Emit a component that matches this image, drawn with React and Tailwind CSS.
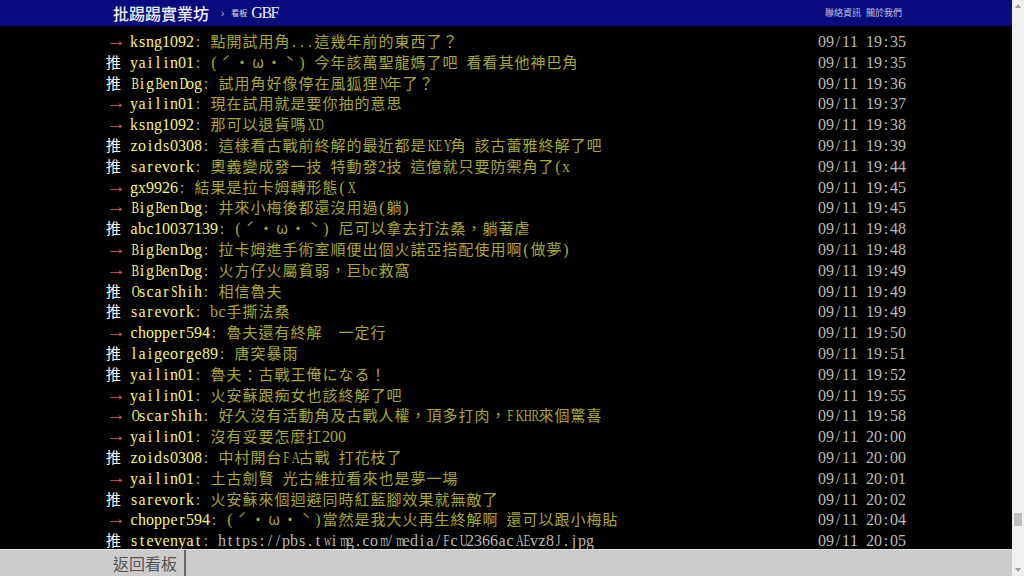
import React from "react";

const pushes = [
  ["→", "ksng1092", "點開試用角...這幾年前的東西了？", "09/11 19:35"],
  ["推", "yailin01", "(ˊ・ω・ˋ) 今年該萬聖龍媽了吧 看看其他神巴角", "09/11 19:35"],
  ["推", "BigBenDog", "試用角好像停在風狐狸N年了？", "09/11 19:36"],
  ["→", "yailin01", "現在試用就是要你抽的意思", "09/11 19:37"],
  ["→", "ksng1092", "那可以退貨嗎XD", "09/11 19:38"],
  ["推", "zoids0308", "這樣看古戰前終解的最近都是KEY角 該古蕾雅終解了吧", "09/11 19:39"],
  ["推", "sarevork", "奧義變成發一技 特動發2技 這億就只要防禦角了(x", "09/11 19:44"],
  ["→", "gx9926", "結果是拉卡姆轉形態(X", "09/11 19:45"],
  ["→", "BigBenDog", "井來小梅後都還沒用過(躺)", "09/11 19:45"],
  ["推", "abc10037139", "(ˊ・ω・ˋ) 尼可以拿去打法桑，躺著虐", "09/11 19:48"],
  ["→", "BigBenDog", "拉卡姆進手術室順便出個火諾亞搭配使用啊(做夢)", "09/11 19:48"],
  ["→", "BigBenDog", "火方仔火屬貧弱，巨bc救窩", "09/11 19:49"],
  ["推", "OscarShih", "相信魯夫", "09/11 19:49"],
  ["推", "sarevork", "bc手撕法桑", "09/11 19:49"],
  ["→", "chopper594", "魯夫還有終解  一定行", "09/11 19:50"],
  ["推", "laigeorge89", "唐突暴雨", "09/11 19:51"],
  ["推", "yailin01", "魯夫：古戰王俺になる！", "09/11 19:52"],
  ["→", "yailin01", "火安蘇跟痴女也該終解了吧", "09/11 19:55"],
  ["→", "OscarShih", "好久沒有活動角及古戰人權，頂多打肉，FKHR來個驚喜", "09/11 19:58"],
  ["→", "yailin01", "沒有妥要怎麼扛200", "09/11 20:00"],
  ["推", "zoids0308", "中村開台FA古戰 打花枝了", "09/11 20:00"],
  ["→", "yailin01", "土古劍賢 光古維拉看來也是夢一場", "09/11 20:01"],
  ["推", "sarevork", "火安蘇來個迴避同時紅藍腳效果就無敵了", "09/11 20:02"],
  ["→", "chopper594", "(ˊ・ω・ˋ)當然是我大火再生終解啊 還可以跟小梅貼", "09/11 20:04"],
  ["推", "stevenyat", "https://pbs.twimg.com/media/FcU2366acAEvz8J.jpg", "09/11 20:05", true],
];

// narrow down the wide latin glyphs so they stay inside their half-width cell
function squeeze(ch) {
  if (ch === "m" || ch === "w") return "scale-x-[0.64]";
  if (ch === "M" || ch === "W") return "scale-x-[0.56]";
  if (/[A-Z]/.test(ch)) return "scale-x-[0.7]";
  return "";
}

// renders text on a terminal grid: half-width = 8px, full-width = 16px
function Cells({ text, color, link }) {
  return Array.from(text).map((ch, i) => {
    const full = ch.codePointAt(0) > 0x7f;
    if (full) {
      return (
        <span
          key={i}
          className={`inline-block w-[16px] text-center font-['Noto_Sans_CJK_TC',sans-serif] text-[15px] ${color}`}
        >
          {ch}
        </span>
      );
    }
    return (
      <span
        key={i}
        className={`inline-block w-[8px] text-center font-['Liberation_Serif',serif] text-[16px] ${color} ${
          link ? "underline underline-offset-1" : ""
        }`}
      >
        <span className={`inline-block ${squeeze(ch)}`}>{ch === " " ? "\u00a0" : ch}</span>
      </span>
    );
  });
}

function PushRow({ tag, user, content, time, link }) {
  const isPush = tag === "推";
  return (
    <div className="flex h-[20.8px] justify-between whitespace-nowrap leading-[20.8px]">
      <div>
        {isPush ? (
          <span className="inline-block w-[24px] font-['Noto_Sans_CJK_TC',sans-serif] text-[15px] text-white">
            推
          </span>
        ) : (
          <span className="inline-block w-[24px] font-['Liberation_Serif','Noto_Sans_CJK_TC',serif] text-[16px] text-[#e25a5a]">
            <span className="inline-block origin-left -translate-y-[1px] scale-x-[1.28]">→</span>
          </span>
        )}
        <Cells text={user} color="text-[#f4f47a]" />
        <Cells text=": " color="text-[#a8a832]" />
        <Cells text={content} color={link ? "text-[#b8b8b8]" : "text-[#a8a832]"} link={link} />
      </div>
      <div>
        <Cells text={time} color="text-[#bbbbbb]" />
      </div>
    </div>
  );
}

function Scrollbar() {
  return (
    <div className="flex h-full w-[12px] flex-col bg-[#f0f0f0]">
      <div className="flex h-[12px] items-center justify-center">
        <svg width="6" height="4" viewBox="0 0 6 4">
          <path d="M3 0 L6 4 L0 4 Z" fill="#a3a3a3" />
        </svg>
      </div>
      <div className="flex-1" />
      <div className="mx-[2px] h-[13px] bg-[#c1c1c1]" />
      <div className="h-[38px]" />
      <div className="flex h-[12px] items-center justify-center">
        <svg width="6" height="4" viewBox="0 0 6 4">
          <path d="M0 0 L6 0 L3 4 Z" fill="#a3a3a3" />
        </svg>
      </div>
    </div>
  );
}

export default function App() {
  return (
    <div className="flex h-[576px] w-[1024px] overflow-hidden bg-black">
      <div className="flex min-w-0 flex-1 flex-col">
        {/* top bar */}
        <div className="h-[26px] shrink-0 bg-[#0a0a7e]">
          <div className="mx-auto flex h-full w-[800px] items-center justify-between pl-[7px] pr-[4px]">
            <div className="flex items-center">
              <span className="font-['Noto_Sans_CJK_TC',sans-serif] text-[16px] font-medium leading-none text-[#eeeeee]">
                批踢踢實業坊
              </span>
              <span className="ml-[12px] font-['Liberation_Sans',sans-serif] text-[10px] text-[#bbbbbb]">›</span>
              <span className="ml-[7px] font-['Noto_Sans_CJK_TC',sans-serif] text-[8px] text-[#dddddd]">看板</span>
              <span className="ml-[4px] font-['Liberation_Serif',serif] text-[16px] tracking-[-1.5px] text-[#eeeeee]">
                GBF
              </span>
            </div>
            <div className="flex gap-[5px] font-['Noto_Sans_CJK_TC',sans-serif] text-[9px] text-[#c4c4dc]">
              <span>聯絡資訊</span>
              <span>關於我們</span>
            </div>
          </div>
        </div>

        {/* pushes */}
        <div className="min-h-0 flex-1 overflow-hidden pt-[5px]">
          <div className="mx-auto w-[800px]">
            {pushes.map(([tag, user, content, time, link], i) => (
              <PushRow key={i} tag={tag} user={user} content={content} time={time} link={link} />
            ))}
          </div>
        </div>

        {/* bottom bar */}
        <div className="h-[27px] shrink-0 border-t border-[#e2e2e2] bg-[#cccccc]">
          <div className="mx-auto flex h-full w-[800px]">
            <div className="flex h-full items-center border-r-2 border-[#6a6a6a] px-[7px] font-['Noto_Sans_CJK_TC',sans-serif] text-[16px] text-[#555555]">
              返回看板
            </div>
          </div>
        </div>
      </div>
      <Scrollbar />
    </div>
  );
}
